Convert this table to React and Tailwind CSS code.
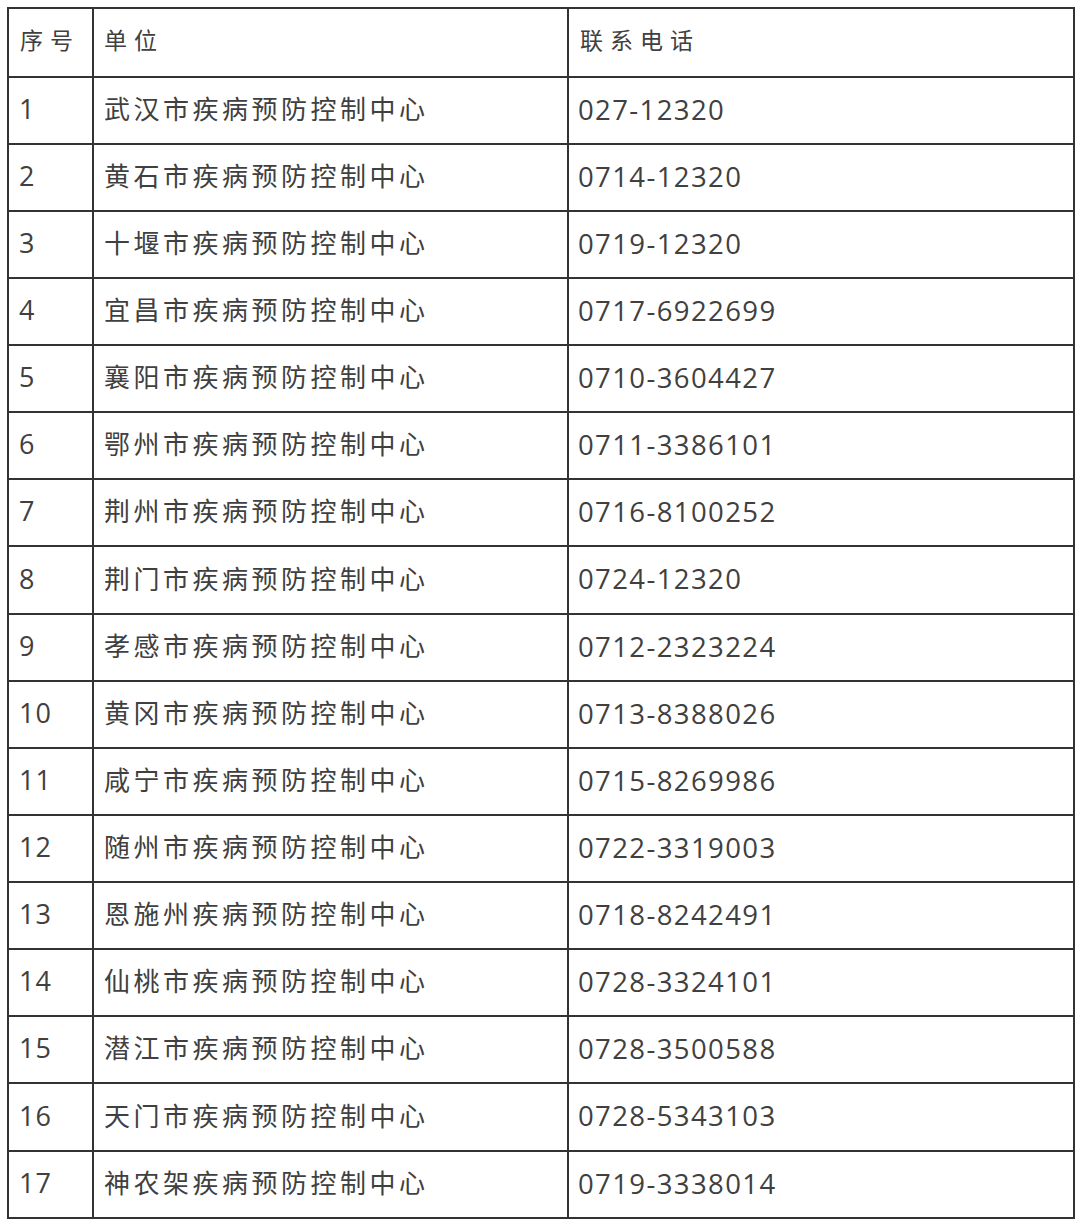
import React from "react"

const rows = [
  ["1", "武汉市疾病预防控制中心", "027-12320"],
  ["2", "黄石市疾病预防控制中心", "0714-12320"],
  ["3", "十堰市疾病预防控制中心", "0719-12320"],
  ["4", "宜昌市疾病预防控制中心", "0717-6922699"],
  ["5", "襄阳市疾病预防控制中心", "0710-3604427"],
  ["6", "鄂州市疾病预防控制中心", "0711-3386101"],
  ["7", "荆州市疾病预防控制中心", "0716-8100252"],
  ["8", "荆门市疾病预防控制中心", "0724-12320"],
  ["9", "孝感市疾病预防控制中心", "0712-2323224"],
  ["10", "黄冈市疾病预防控制中心", "0713-8388026"],
  ["11", "咸宁市疾病预防控制中心", "0715-8269986"],
  ["12", "随州市疾病预防控制中心", "0722-3319003"],
  ["13", "恩施州疾病预防控制中心", "0718-8242491"],
  ["14", "仙桃市疾病预防控制中心", "0728-3324101"],
  ["15", "潜江市疾病预防控制中心", "0728-3500588"],
  ["16", "天门市疾病预防控制中心", "0728-5343103"],
  ["17", "神农架疾病预防控制中心", "0719-3338014"],
]

const font = {
  fontFamily: '"Open Sans", "Noto Sans CJK SC", sans-serif',
}

const App = () => {
  return (
    <div className="w-[1080px] h-[1225px] bg-white pt-[7px] pl-[7px]" style={font}>
      <div className="w-[1068px] border-2 border-[#333] text-[#404040]">
        <div className="flex h-[67px] items-center text-[23px] tracking-[7px]">
          <div className="w-[85px] h-full flex items-center pl-[11px] border-r-2 border-[#333] pb-[4px]">
            序号
          </div>
          <div className="w-[475px] h-full flex items-center pl-[10px] border-r-2 border-[#333] pb-[4px]">
            单位
          </div>
          <div className="flex-1 h-full flex items-center pl-[11px] pb-[4px]">
            联系电话
          </div>
        </div>
        {rows.map(([no, unit, phone], i) => (
          <div
            key={no}
            className={`flex items-stretch border-t-2 border-[#333] ${
              i === 7 || i === 15 ? "h-[68px]" : "h-[67px]"
            }`}
          >
            <div className="w-[85px] flex items-center pl-[10px] pb-[2px] border-r-2 border-[#333] text-[27px] tracking-[1px]">
              {no}
            </div>
            <div className="w-[475px] flex items-center pl-[10px] pb-[2px] border-r-2 border-[#333] text-[26px] tracking-[3.5px]">
              {unit}
            </div>
            <div className="flex-1 flex items-center pl-[9px] pb-[2px] text-[27.5px] tracking-[1.4px]">
              {phone}
            </div>
          </div>
        ))}
      </div>
    </div>
  )
}

export default App
